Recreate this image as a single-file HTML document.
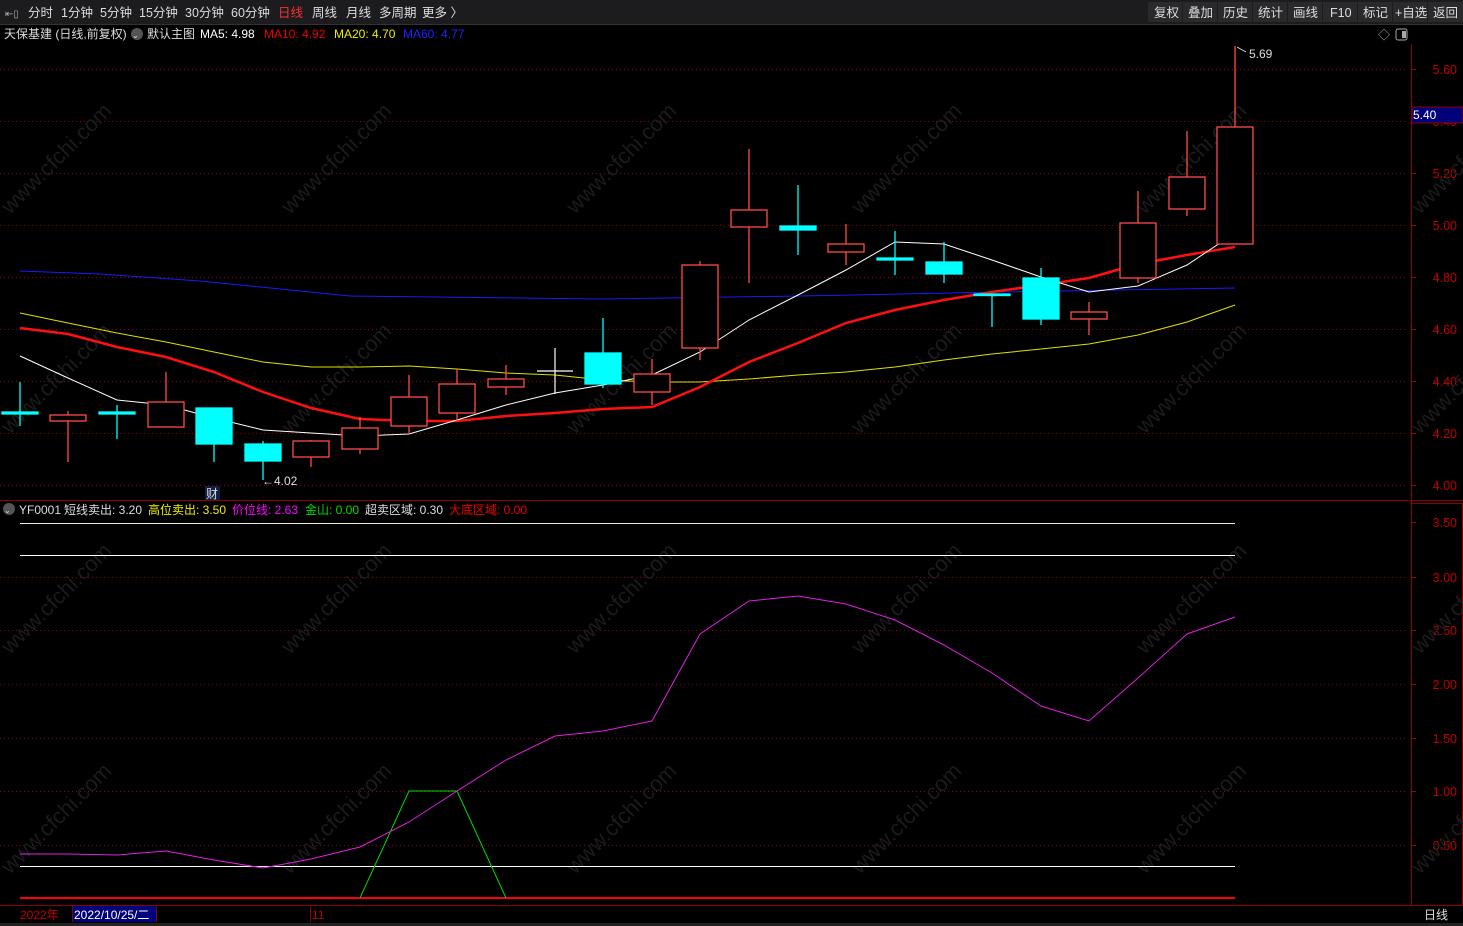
<!DOCTYPE html>
<html><head><meta charset="utf-8"><style>
html,body{margin:0;padding:0;background:#000;width:1463px;height:926px;overflow:hidden;font-family:"Liberation Sans","Noto Sans CJK SC",sans-serif;}
svg{position:absolute;left:0;top:0}
</style></head><body>
<svg width="1463" height="926" xmlns="http://www.w3.org/2000/svg" font-family="Liberation Sans, Noto Sans CJK SC, sans-serif">
<rect width="1463" height="926" fill="#000"/>
<rect x="0" y="0" width="1463" height="24" fill="#1c1c1e"/>
<line x1="0" y1="24.5" x2="1463" y2="24.5" stroke="#333"/>
<g font-size="12.5" fill="#ddd">
<text x="5" y="17" font-size="10" fill="#aaa">⇤▯</text>
<text x="28" y="17">分时</text><text x="61" y="17">1分钟</text><text x="100" y="17">5分钟</text><text x="139" y="17">15分钟</text><text x="185" y="17">30分钟</text><text x="231" y="17">60分钟</text>
<text x="278" y="17" fill="#ff3030">日线</text><text x="312" y="17">周线</text><text x="346" y="17">月线</text><text x="379" y="17">多周期</text><text x="422" y="17">更多 〉</text>
</g>
<g fill="#2a2a2c"><rect x="1148" y="2" width="34" height="20"/><rect x="1183" y="2" width="34" height="20"/><rect x="1218" y="2" width="34" height="20"/><rect x="1253" y="2" width="34" height="20"/><rect x="1288" y="2" width="34" height="20"/><rect x="1323" y="2" width="34" height="20"/><rect x="1358" y="2" width="34" height="20"/><rect x="1393" y="2" width="34" height="20"/><rect x="1428" y="2" width="35" height="20"/></g>
<g font-size="12.5" fill="#ddd">
<text x="1154" y="17">复权</text><text x="1188" y="17">叠加</text><text x="1223" y="17">历史</text><text x="1258" y="17">统计</text><text x="1293" y="17">画线</text><text x="1330" y="17">F10</text><text x="1363" y="17">标记</text><text x="1395" y="17">+自选</text><text x="1433" y="17">返回</text>
</g>
<g font-size="12" >
<text x="4" y="38" fill="#ddd">天保基建 (日线,前复权)</text>
<circle cx="137" cy="34" r="6" fill="#555"/><text x="132" y="38" font-size="8" fill="#ddd">⌄</text>
<text x="147" y="38" fill="#ddd">默认主图</text>
<text x="200" y="38" fill="#fff">MA5: 4.98</text>
<text x="264" y="38" fill="#e00">MA10: 4.92</text>
<text x="334" y="38" fill="#ee0">MA20: 4.70</text>
<text x="403" y="38" fill="#22f">MA60: 4.77</text>
</g>
<text x="1378" y="39" font-size="12" fill="#aaa">◇</text>
<rect x="1396" y="29" width="11" height="11" rx="2" fill="none" stroke="#aaa"/><rect x="1402" y="31" width="4" height="7" fill="#aaa"/>
<line x1="1411.5" y1="44" x2="1411.5" y2="906" stroke="#8b0000"/>
<line x1="0" y1="500.5" x2="1463" y2="500.5" stroke="#8b0000"/>
<line x1="1411" y1="503.5" x2="1463" y2="503.5" stroke="#8b0000"/>
<line x1="0" y1="905.5" x2="1463" y2="905.5" stroke="#8b0000"/>
<line x1="1462.5" y1="503" x2="1462.5" y2="905" stroke="#8b0000"/>
<g stroke="#a00000" stroke-dasharray="1,3">
<line x1="0" y1="69.5" x2="1408" y2="69.5"/><line x1="0" y1="121.5" x2="1408" y2="121.5"/><line x1="0" y1="173.5" x2="1408" y2="173.5"/><line x1="0" y1="225.5" x2="1408" y2="225.5"/><line x1="0" y1="277.5" x2="1408" y2="277.5"/><line x1="0" y1="329.5" x2="1408" y2="329.5"/><line x1="0" y1="381.5" x2="1408" y2="381.5"/><line x1="0" y1="433.5" x2="1408" y2="433.5"/><line x1="0" y1="485.5" x2="1408" y2="485.5"/>
<line x1="0" y1="577.5" x2="1408" y2="577.5"/><line x1="0" y1="630.5" x2="1408" y2="630.5"/><line x1="0" y1="684.5" x2="1408" y2="684.5"/><line x1="0" y1="738.5" x2="1408" y2="738.5"/><line x1="0" y1="791.5" x2="1408" y2="791.5"/><line x1="0" y1="845.5" x2="1408" y2="845.5"/>
</g>
<g stroke="#a00000"><line x1="1411" y1="69.5" x2="1416" y2="69.5"/><line x1="1411" y1="121.5" x2="1416" y2="121.5"/><line x1="1411" y1="173.5" x2="1416" y2="173.5"/><line x1="1411" y1="225.5" x2="1416" y2="225.5"/><line x1="1411" y1="277.5" x2="1416" y2="277.5"/><line x1="1411" y1="329.5" x2="1416" y2="329.5"/><line x1="1411" y1="381.5" x2="1416" y2="381.5"/><line x1="1411" y1="433.5" x2="1416" y2="433.5"/><line x1="1411" y1="485.5" x2="1416" y2="485.5"/>
<line x1="1411" y1="522.5" x2="1416" y2="522.5"/><line x1="1411" y1="577.5" x2="1416" y2="577.5"/><line x1="1411" y1="630.5" x2="1416" y2="630.5"/><line x1="1411" y1="684.5" x2="1416" y2="684.5"/><line x1="1411" y1="738.5" x2="1416" y2="738.5"/><line x1="1411" y1="791.5" x2="1416" y2="791.5"/><line x1="1411" y1="845.5" x2="1416" y2="845.5"/></g>
<g font-size="12.5" fill="#c00000" text-anchor="end">
<text x="1457" y="74">5.60</text><text x="1457" y="126">5.40</text><text x="1457" y="178">5.20</text><text x="1457" y="230">5.00</text><text x="1457" y="282">4.80</text><text x="1457" y="334">4.60</text><text x="1457" y="386">4.40</text><text x="1457" y="438">4.20</text><text x="1457" y="490">4.00</text>
<text x="1457" y="527">3.50</text><text x="1457" y="582">3.00</text><text x="1457" y="635">2.50</text><text x="1457" y="689">2.00</text><text x="1457" y="743">1.50</text><text x="1457" y="796">1.00</text><text x="1457" y="850">0.50</text>
</g>
<rect x="1412" y="107" width="51" height="16" fill="#00007a" stroke="#8b0000"/>
<text x="1413" y="119" font-size="12" fill="#fff">5.40</text>
<g font-size="22" fill="#1b1b1b">
<text transform="translate(10,215) rotate(-45)">www.cfchi.com</text><text transform="translate(290,215) rotate(-45)">www.cfchi.com</text><text transform="translate(575,215) rotate(-45)">www.cfchi.com</text><text transform="translate(860,215) rotate(-45)">www.cfchi.com</text><text transform="translate(1145,215) rotate(-45)">www.cfchi.com</text><text transform="translate(1420,215) rotate(-45)">www.cfchi.com</text>
<text transform="translate(10,435) rotate(-45)">www.cfchi.com</text><text transform="translate(290,435) rotate(-45)">www.cfchi.com</text><text transform="translate(575,435) rotate(-45)">www.cfchi.com</text><text transform="translate(860,435) rotate(-45)">www.cfchi.com</text><text transform="translate(1145,435) rotate(-45)">www.cfchi.com</text><text transform="translate(1420,435) rotate(-45)">www.cfchi.com</text>
<text transform="translate(10,655) rotate(-45)">www.cfchi.com</text><text transform="translate(290,655) rotate(-45)">www.cfchi.com</text><text transform="translate(575,655) rotate(-45)">www.cfchi.com</text><text transform="translate(860,655) rotate(-45)">www.cfchi.com</text><text transform="translate(1145,655) rotate(-45)">www.cfchi.com</text><text transform="translate(1420,655) rotate(-45)">www.cfchi.com</text>
<text transform="translate(10,875) rotate(-45)">www.cfchi.com</text><text transform="translate(290,875) rotate(-45)">www.cfchi.com</text><text transform="translate(575,875) rotate(-45)">www.cfchi.com</text><text transform="translate(860,875) rotate(-45)">www.cfchi.com</text><text transform="translate(1145,875) rotate(-45)">www.cfchi.com</text><text transform="translate(1420,875) rotate(-45)">www.cfchi.com</text>
</g>
<polyline fill="none" stroke="#1a1aff" stroke-width="1" points="20,271 100,274 200,281 350,296 600,299 800,296 1000,292 1235,288"/>
<polyline fill="none" stroke="#e0e000" stroke-width="1" points="20,313 68,323 117,333 166,342 214,352 263,362 311,367 360,367 409,366 457,369 506,373 555,375 603,380 652,382 700,382 749,379 798,375 846,372 895,367 944,360 992,354 1041,349 1089,344 1138,335 1187,322 1235,305"/>
<polyline fill="none" stroke="#ff1010" stroke-width="2.5" points="20,328 68,334 117,347 166,357 214,372 263,392 311,408 360,419 409,421 457,421 506,416 555,413 603,409 652,407 700,387 749,362 798,343 846,323 895,310 944,300 992,292 1041,285 1089,278 1138,264 1187,255 1235,247"/>
<polyline fill="none" stroke="#fff" stroke-width="1" points="20,356 68,378 117,400 166,405 214,418 263,430 311,433 360,436 409,434 457,420 506,405 555,393 603,385 652,375 700,352 749,320 798,295 846,270 895,242 944,244 992,260 1041,277 1089,292 1138,286 1187,265 1235,233"/>
<g stroke="#ff4a4a" stroke-width="1.3" fill="#000">
<line x1="68" y1="411" x2="68" y2="462"/><rect x="50" y="415" width="36" height="6"/>
<line x1="166" y1="372" x2="166" y2="427"/><rect x="148" y="402" width="36" height="25"/>
<line x1="311" y1="440" x2="311" y2="467"/><rect x="293" y="441" width="36" height="16"/>
<line x1="360" y1="417" x2="360" y2="454"/><rect x="342" y="428" width="36" height="21"/>
<line x1="409" y1="375" x2="409" y2="434"/><rect x="391" y="397" width="36" height="29"/>
<line x1="457" y1="369" x2="457" y2="421"/><rect x="439" y="384" width="36" height="29"/>
<line x1="506" y1="365" x2="506" y2="395"/><rect x="488" y="379" width="36" height="8"/>
<line x1="652" y1="359" x2="652" y2="405"/><rect x="634" y="374" width="36" height="18"/>
<line x1="700" y1="261" x2="700" y2="360"/><rect x="682" y="265" width="36" height="83"/>
<line x1="749" y1="149" x2="749" y2="283"/><rect x="731" y="210" width="36" height="17"/>
<line x1="846" y1="224" x2="846" y2="265"/><rect x="828" y="244" width="36" height="8"/>
<line x1="1089" y1="302" x2="1089" y2="335"/><rect x="1071" y="312" width="36" height="7"/>
<line x1="1138" y1="191" x2="1138" y2="283"/><rect x="1120" y="223" width="36" height="55"/>
<line x1="1187" y1="131" x2="1187" y2="216"/><rect x="1169" y="177" width="36" height="32"/>
<line x1="1235" y1="46" x2="1235" y2="127"/><rect x="1217" y="127" width="36" height="117"/>
</g>
<g stroke="#00ffff" stroke-width="1.3" fill="#00ffff">
<line x1="20" y1="382" x2="20" y2="426"/><rect x="2" y="412" width="36" height="2"/>
<line x1="117" y1="405" x2="117" y2="439"/><rect x="99" y="412" width="36" height="2"/>
<line x1="214" y1="408" x2="214" y2="462"/><rect x="196" y="408" width="36" height="36"/>
<line x1="263" y1="441" x2="263" y2="480"/><rect x="245" y="444" width="36" height="17"/>
<line x1="603" y1="318" x2="603" y2="388"/><rect x="585" y="353" width="36" height="31"/>
<line x1="798" y1="185" x2="798" y2="255"/><rect x="780" y="226" width="36" height="4"/>
<line x1="895" y1="231" x2="895" y2="275"/><rect x="877" y="258" width="36" height="2"/>
<line x1="944" y1="242" x2="944" y2="283"/><rect x="926" y="262" width="36" height="12"/>
<line x1="992" y1="294" x2="992" y2="327"/><rect x="974" y="294" width="36" height="1.5"/>
<line x1="1041" y1="268" x2="1041" y2="325"/><rect x="1023" y="278" width="36" height="41"/>
</g>
<g stroke="#fff" stroke-width="1.2"><line x1="555" y1="348" x2="555" y2="394"/><line x1="537" y1="371" x2="573" y2="371"/></g>
<text x="1249" y="58" font-size="12" fill="#ddd">5.69</text>
<polyline points="1237,47 1246,52" stroke="#ddd" fill="none"/>
<text x="262" y="485" font-size="12" fill="#ddd">←4.02</text>
<rect x="205" y="486" width="15" height="14" fill="#102040"/><text x="206" y="498" font-size="12" fill="#ddd">财</text>
<g font-size="12">
<circle cx="9" cy="509" r="6" fill="#555"/><text x="4" y="513" font-size="8" fill="#ddd">⌄</text>
<text x="19" y="514" fill="#ddd">YF0001</text>
<text x="64" y="514" fill="#ddd">短线卖出: 3.20</text>
<text x="148" y="514" fill="#ee0">高位卖出: 3.50</text>
<text x="232" y="514" fill="#f0f">价位线: 2.63</text>
<text x="305" y="514" fill="#0d0">金山: 0.00</text>
<text x="365" y="514" fill="#ddd">超卖区域: 0.30</text>
<text x="449" y="514" fill="#e00">大底区域: 0.00</text>
</g>
<line x1="20" y1="523.5" x2="1235" y2="523.5" stroke="#eeeecc"/>
<line x1="20" y1="555.5" x2="1235" y2="555.5" stroke="#fff"/>
<line x1="20" y1="866.5" x2="1235" y2="866.5" stroke="#fff"/>
<line x1="20" y1="898" x2="1235" y2="898" stroke="#f00" stroke-width="2"/>
<polyline fill="none" stroke="#00dd00" points="360,898 409,791 457,791 506,898"/>
<polyline fill="none" stroke="#e020e0" points="20,854 68,854 117,855 166,851 214,860 263,868 311,859 360,847 409,822 457,791 506,760 555,736 603,731 652,721 700,634 749,601 798,596 846,604 895,620 944,645 992,673 1041,706 1089,721 1138,678 1187,634 1235,617"/>
<text x="20" y="919" font-size="12" fill="#c00000">2022年</text>
<rect x="72" y="906" width="84" height="16" fill="#00007a"/>
<line x1="72.5" y1="906" x2="72.5" y2="922" stroke="#8b0000"/><line x1="156.5" y1="906" x2="156.5" y2="922" stroke="#8b0000"/>
<text x="74" y="919" font-size="12" fill="#fff">2022/10/25/二</text>
<line x1="310.5" y1="906" x2="310.5" y2="922" stroke="#8b0000"/>
<text x="312" y="919" font-size="12" fill="#c00000">11</text>
<text x="1424" y="919" font-size="12" fill="#ddd">日线</text>
<rect x="0" y="923" width="1463" height="3" fill="#222"/>
</svg>
</body></html>
